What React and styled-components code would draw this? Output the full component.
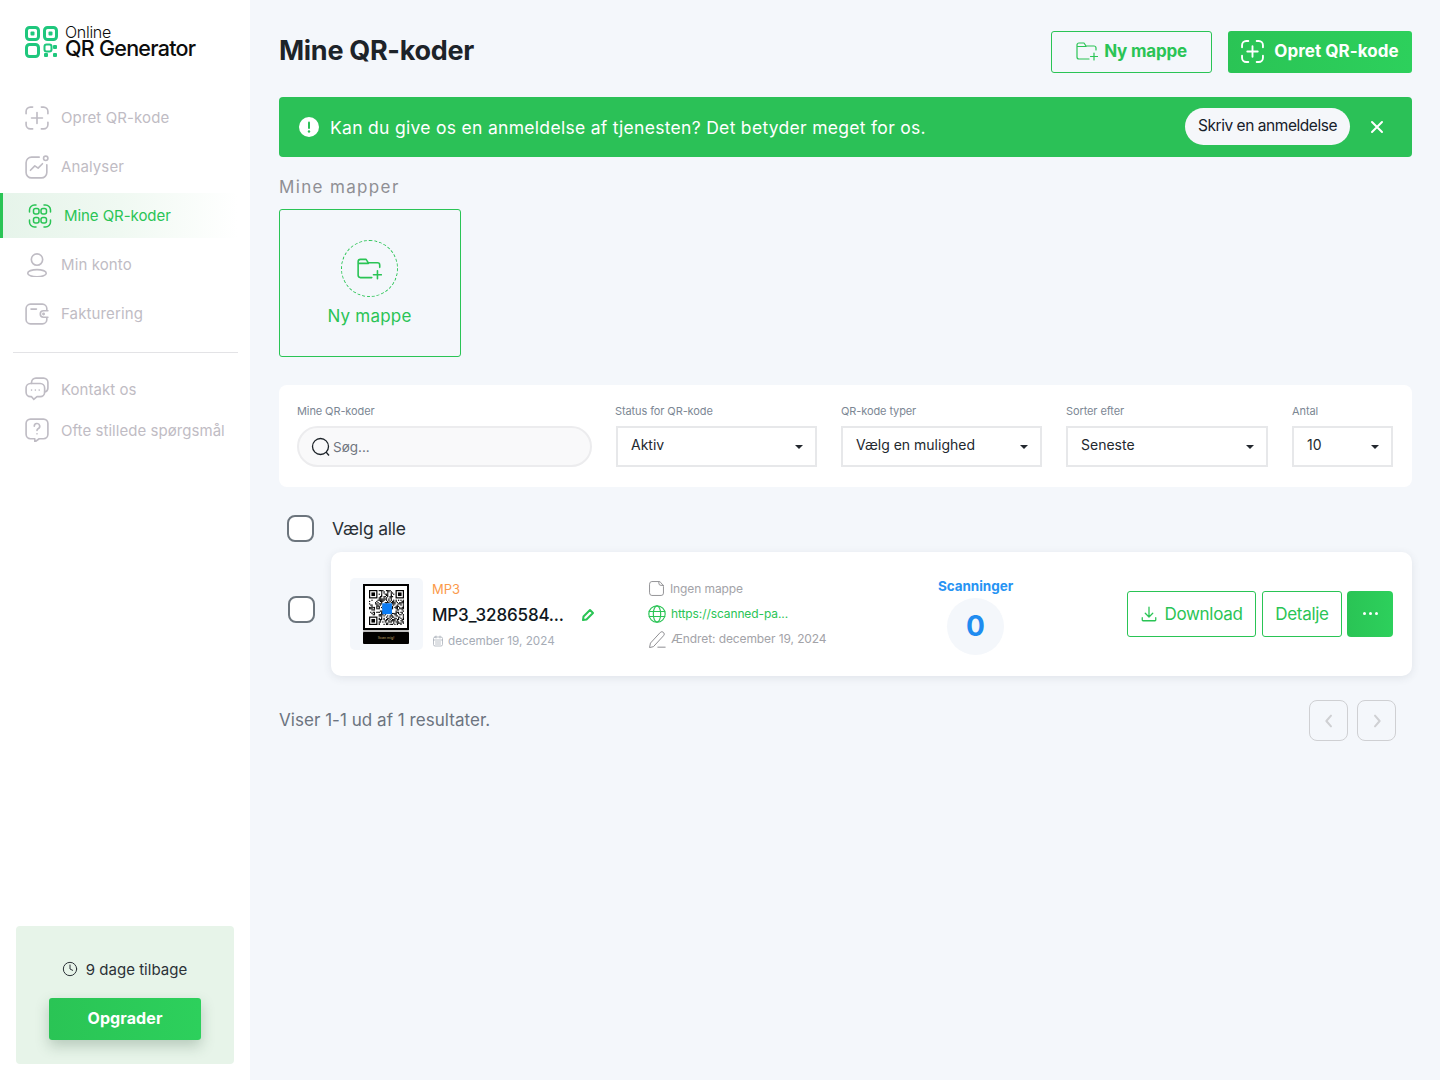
import React from "react";
import styled, { createGlobalStyle } from "styled-components";

const green = "#2ac455";
const banner = "#2bc157";
const Global = createGlobalStyle`
  html, body { margin: 0; padding: 0; height: 1080px; background: #f4f7fb; }
  body { font-family: Inter, "Noto Sans", sans-serif; color: #1d2329; overflow: hidden; }
  * { box-sizing: border-box; }
  #root { height: 1080px; }
`;

const Page = styled.div`display: flex; height: 1080px;`;
const Sidebar = styled.aside`
  width: 250px; flex: none; background: #fff; display: flex; flex-direction: column;
  padding: 25px 0 16px;
`;
const Logo = styled.div`display: flex; align-items: center; gap: 8px; padding-left: 25px; height: 34px;`;
const LogoText = styled.div`display: flex; flex-direction: column; color: #0c0c0c; margin: -2px 0 0 -1px;`;
const LogoTop = styled.span`font-size: 16px; line-height: 14px; font-weight: 300; letter-spacing: -0.3px;`;
const LogoBottom = styled.span`font-size: 21.5px; line-height: 18px; font-weight: 500; letter-spacing: -0.75px; white-space: nowrap;`;
const Nav = styled.nav`display: flex; flex-direction: column; gap: 4px; margin-top: 36px;`;
const NavItem = styled.a`
  display: flex; align-items: center; height: 45px; font-size: 15px;
  letter-spacing: ${p => (p.$active ? "-0.06px" : "0.12px")};
  gap: 12px; padding-left: 25px;
  width: ${p => (p.$active ? "237px" : "auto")};
  color: ${p => (p.$active ? green : "#bfbcc4")};
  background: ${p => (p.$active ? "linear-gradient(90deg,#e6f4ea 0%,#f0f9f2 50%,#fff 100%)" : "transparent")};
  border-left: ${p => (p.$active ? `3px solid ${green}` : "none")};
  svg { flex: none; }
`;
const Divider = styled.hr`border: 0; border-top: 1px solid #e3e3e6; margin: 16px 12px 21px 13px;`;
const SubNav = styled.nav`display: flex; flex-direction: column; gap: 11px;`;
const SubItem = styled.a`
  display: flex; align-items: center; height: 30px; gap: 12px; padding-left: 25px;
  font-size: 15px; letter-spacing: 0.05px; color: #bfbcc4; white-space: nowrap;
`;
const Trial = styled.div`
  margin: auto 16px 0; height: 138px; background: #e7f4e9; border-radius: 4px;
  display: flex; flex-direction: column; align-items: center; padding-top: 33px;
`;
const TrialText = styled.div`display: flex; align-items: center; gap: 8px; font-size: 15px; letter-spacing: 0.02px; color: #2b3137; height: 20px; margin-left: -1px;`;
const UpgradeBtn = styled.button`
  width: 152px; height: 42px; margin-top: 19px; padding: 0 0 2px; border: 0; border-radius: 3px; color: #fff;
  font: 700 16px Inter, sans-serif; letter-spacing: 0.1px; background: linear-gradient(90deg,#2ac455,#2dd05c);
  box-shadow: 0 6px 14px rgba(40,80,50,.25);
`;

const Main = styled.main`flex: 1; min-width: 0; padding: 31px 28px 0 29px;`;
const Header = styled.header`display: flex; align-items: center; justify-content: space-between; height: 42px;`;
const Title = styled.h1`margin: 0; padding-bottom: 4px; font-size: 27px; font-weight: 700; letter-spacing: -0.3px; color: #1d2329;`;
const HeaderActions = styled.div`display: flex; gap: 16px;`;
const HeaderBtn = styled.button`
  height: 42px; width: ${p => p.$w}px; display: flex; align-items: center; justify-content: center; gap: ${p => p.$gap || 6}px;
  padding: 0 0 2px; border-radius: 3px; font: 700 17px Inter, sans-serif; letter-spacing: ${p => (p.$solid ? "0.05px" : "-0.2px")};
  color: ${p => (p.$solid ? "#fff" : green)};
  background: ${p => (p.$solid ? "linear-gradient(90deg,#2ac455,#2dd05c)" : "transparent")};
  border: ${p => (p.$solid ? "0" : `1px solid ${green}`)};
`;
const Banner = styled.div`
  margin-top: 24px; height: 60px; border-radius: 4px; background: ${banner}; color: #fff;
  display: flex; align-items: center; padding: 0 28px 0 20px; font-size: 17.5px; letter-spacing: 0.3px;
`;
const BannerText = styled.span`margin-left: 11px; flex: 1;`;
const ReviewBtn = styled.button`
  height: 37px; width: 165px; border: 0; border-radius: 19px; background: #f5f7fa; color: #17202a; padding: 0 0 2px;
  font: 400 15.5px Inter, sans-serif; letter-spacing: -0.45px; margin: -2px 20px 0 0;
`;
const SectionTitle = styled.h2`margin: 20px 0 12px; font-size: 17px; line-height: 20px; font-weight: 400; letter-spacing: 1.35px; color: #8f8f94;`;
const FolderCard = styled.div`
  width: 182px; height: 148px; border: 1px solid ${green}; border-radius: 3px;
  display: flex; flex-direction: column; align-items: center; padding: 30px 1px 0 0;
  color: ${green}; font-size: 17px; letter-spacing: 0.2px;
`;
const DashedCircle = styled.div`
  width: 57px; height: 57px; border: 1px dashed ${green}; border-radius: 50%;
  display: flex; align-items: center; justify-content: center; margin-bottom: 9px;
`;
const FilterCard = styled.section`
  margin-top: 28px; height: 102px; background: #fff; border-radius: 8px; padding: 19px 19px 0 18px;
  display: grid; grid-template-columns: 295px 201px 201px 202px 101px; column-gap: 24px;
`;
const Field = styled.div`display: flex; flex-direction: column;`;
const FieldLabel = styled.label`font-size: 11px; line-height: 14px; color: #7c8794; margin: 0 0 8px ${p => (p.$nudge ? "-1px" : "0")}; letter-spacing: -0.1px;`;
const SearchBox = styled.div`
  height: 41px; border: 2px solid #ececee; border-radius: 21px; background: #f9f9fa;
  display: flex; align-items: center; padding-left: 12px; gap: 2px; font-size: 13.5px; color: #70767f;
`;
const Select = styled.div`
  height: 41px; border: 2px solid #e7e8ea; display: flex; align-items: center; justify-content: space-between;
  padding: 0 12px 5px 13px; font-size: 14px; color: #23282e; background: #fff;
`;
const Caret = styled.i`width: 0; height: 0; border: 4px solid transparent; border-top-color: #23282e; border-bottom: 0; margin-top: 5px;`;
const SelectAllRow = styled.div`display: flex; align-items: center; gap: 18px; margin-top: 28px; padding-left: 8px; height: 27px; font-size: 17.5px; letter-spacing: -0.2px; color: #2b3137;`;
const Box = styled.span`display: block; flex: none; width: 27px; height: 27px; border: 2px solid #6c757d; border-radius: 8px; background: #fff;`;
const Row = styled.div`display: flex; align-items: center; margin-top: 10px;`;
const CheckCell = styled.div`width: 52px; padding-left: 9px; flex: none; margin-top: -10px;`;
const QrCard = styled.article`
  flex: 1; height: 124px; background: #fff; border-radius: 10px; box-shadow: 0 2px 8px rgba(50,60,80,.10);
  display: flex; align-items: center; padding: 0 19px;
`;
const Thumb = styled.div`
  width: 73px; height: 72px; border-radius: 5px; background: #f4f7fb; flex: none;
  display: flex; flex-direction: column; align-items: center; padding: 6px 1px 0 0;
`;
const QrFrame = styled.div`width: 46px; height: 46px; border: 2px solid #000; background: #fff; display: flex; align-items: center; justify-content: center;`;
const QrCaption = styled.div`width: 46px; height: 12px; margin-top: 2px; background: #000; color: #c9a668; font-size: 3.5px; display: flex; align-items: center; justify-content: center; border-radius: 1px; box-shadow: 0 -2px 0 #bdbdbd;`;
const InfoCol = styled.div`width: 225px; flex: none; padding-left: 9px;`;
const TypeLabel = styled.div`font-size: 13px; line-height: 18px; color: #fb9a4b;`;
const NameRow = styled.div`display: flex; align-items: center; margin-top: 6px; font-size: 17px; line-height: 22px; letter-spacing: -0.15px; color: #0e1720; font-weight: 500; gap: 17px;`;
const DateRow = styled.div`display: flex; align-items: center; gap: 4px; font-size: 11.7px; line-height: 16px; margin-top: 7px; color: #a6acb6;`;
const MetaCol = styled.div`width: 289px; flex: none; display: flex; flex-direction: column; gap: 6px; margin-top: -1px;`;
const MetaRow = styled.div`display: flex; align-items: center; gap: 5px; height: 19px; font-size: 12px; color: ${p => p.$green ? green : "#a3a3a8"}; letter-spacing: -0.1px; white-space: nowrap;`;
const ScanCol = styled.div`width: 77px; flex: none; display: flex; flex-direction: column; align-items: center; margin-top: 5px;`;
const ScanLabel = styled.div`font-size: 13.5px; font-weight: 700; line-height: 16px; color: #2693f3; letter-spacing: -0.05px;`;
const ScanCircle = styled.div`width: 57px; height: 57px; margin-top: 4px; padding-bottom: 2px; border-radius: 50%; background: #f4f7fb; color: #1f8cf0; font-size: 28px; font-weight: 700; display: flex; align-items: center; justify-content: center;`;
const Actions = styled.div`margin-left: auto; display: flex; gap: 6px; margin-top: -1px;`;
const OutlineBtn = styled.button`
  height: 46px; width: ${p => p.$w}px; background: #fff; border: 1px solid ${green}; border-radius: 3px; color: ${green};
  font: 400 17px Inter, sans-serif; letter-spacing: -0.3px; display: flex; align-items: center; justify-content: center; gap: 6px; padding: 0;
`;
const MoreBtn = styled.button`
  width: 46px; height: 46px; margin-left: -1px; border: 0; border-radius: 4px; background: linear-gradient(90deg,#2ac455,#2dd05c); color: #fff;
  display: flex; align-items: center; justify-content: center; gap: 3px; padding: 0;
  i { width: 3px; height: 3px; border-radius: 50%; background: #fff; }
`;
const Footer = styled.div`display: flex; align-items: center; justify-content: space-between; margin-top: 24px; padding-right: 16px; font-size: 17px; letter-spacing: 0.04px; color: #6c7480;`;
const FooterText = styled.span`margin-top: -2px;`;
const Pager = styled.div`display: flex; gap: 9px;`;
const PageBtn = styled.button`width: 39px; height: 41px; border: 1px solid #cfd0d3; border-radius: 8px; background: transparent; display: flex; align-items: center; justify-content: center; padding: 0;`;

const S = ({ size = 24, w, h, vb, children, color = "currentColor", sw = 1.5 }) => (
  <svg width={w || size} height={h || size} viewBox={vb || "1 1 22 22"} fill="none" stroke={color} strokeWidth={sw} strokeLinecap="round" strokeLinejoin="round">{children}</svg>
);
const PlusScan = p => <S {...p}><path d="M2 8V6a4 4 0 0 1 4-4h2M16 2h2a4 4 0 0 1 4 4v2M22 16v2a4 4 0 0 1-4 4h-2M8 22H6a4 4 0 0 1-4-4v-2M12 7v10M7 12h10" /></S>;
const Chart = p => <S {...p}><path d="M14 3H7a5 5 0 0 0-5 5v9a5 5 0 0 0 5 5h9a5 5 0 0 0 5-5v-7M6 15l4-4 3 2 4-4" /><circle cx="20" cy="4" r="2" /></S>;
const QrScan = p => <S {...p} vb="0 0 24 24"><rect x="5.5" y="4.5" width="5.5" height="5.5" rx="2" /><rect x="13" y="4.5" width="5.5" height="5.5" rx="2" /><rect x="5.5" y="13.5" width="5.5" height="5.5" rx="2" /><rect x="13" y="13.5" width="5.5" height="5.5" rx="2" /><path d="M1.5 8V6a5 5 0 0 1 5-5h1.500M16 1h1.500a5 5 0 0 1 5 5v2M22.500 16v2a5 5 0 0 1-5 5H16M8 23H6.500a5 5 0 0 1-5-5v-2" /></S>;
const User = p => <S {...p}><circle cx="12" cy="7" r="5.200" /><ellipse cx="12" cy="19.500" rx="8.500" ry="3.300" /></S>;
const Wallet = p => <S {...p}><path d="M21 8V7a4 4 0 0 0-4-4H6a4 4 0 0 0-4 4v10a4 4 0 0 0 4 4h11a4 4 0 0 0 4-4v-1M6.500 7.500h5" /><path d="M22 9h-4a3 3 0 0 0 0 6h4" /><circle cx="18" cy="12" r=".6" /></S>;
const Chat = p => <S {...p}><path d="M7 7V6a4 4 0 0 1 4-4h7a4 4 0 0 1 4 4v5a4 4 0 0 1-3 3.800" /><path d="M6 7h9a4 4 0 0 1 4 4v4a4 4 0 0 1-4 4h-3l-3 2.500L7 19H6a4 4 0 0 1-4-4v-4a4 4 0 0 1 4-4z" /><path d="M7 13h.01M10.500 13h.01M14 13h.01" /></S>;
const Question = p => <S {...p}><path d="M6 2h12a4 4 0 0 1 4 4v10a4 4 0 0 1-4 4h-4l-4 3v-3H6a4 4 0 0 1-4-4V6a4 4 0 0 1 4-4z" /><path d="M9.500 8.500a2.500 2.500 0 1 1 3.500 2.300c-.7.400-1 .8-1 1.700M12 15.500h.01" /></S>;
const FolderPlus = p => <S {...p}><path d="M21 11V9a2 2 0 0 0-2-2h-8L9 4H4a2 2 0 0 0-2 2v12a2 2 0 0 0 2 2h10M3 7.500h8" /><path d="M19 14v7M15.500 17.500h7" /></S>;

const LogoMark = () => (
  <svg width="33" height="32" viewBox="0 0 33 32" fill="none">
    <rect x="1.500" y="1.500" width="12" height="12" rx="3" stroke="#1fc77d" strokeWidth="3" />
    <rect x="19.500" y="1.500" width="12" height="12" rx="3" stroke="#1fc77d" strokeWidth="3" />
    <rect x="1.500" y="18.500" width="12" height="12" rx="3" stroke="#1fc77d" strokeWidth="3" />
    <rect x="5.500" y="5.500" width="4" height="4" rx="1" fill="#1fc77d" />
    <rect x="23.500" y="5.500" width="4" height="4" rx="1" fill="#1fc77d" />
    <rect x="19.500" y="18.500" width="7" height="7" rx="2" stroke="#1fc77d" strokeWidth="2" />
    <rect x="19" y="27" width="4" height="4" rx="1" fill="#1fc77d" />
    <rect x="28" y="19" width="4" height="4" rx="1" fill="#1fc77d" />
    <rect x="28" y="27" width="4" height="4" rx="1" fill="#1fc77d" />
  </svg>
);

const QrCode = () => {
  const n = 29, cells = [];
  let seed = 7;
  for (let y = 0; y < n; y++) for (let x = 0; x < n; x++) {
    seed = (seed * 1103515245 + 12345) & 0x7fffffff;
    const inF = (x < 8 && y < 8) || (x >= n - 8 && y < 8) || (x < 8 && y >= n - 8);
    if (!inF && (seed >> 16) % 2) cells.push(<rect key={x + "-" + y} x={x} y={y} width="1" height="1" />);
  }
  const F = ({ x, y }) => <g><rect x={x + .5} y={y + .5} width="6" height="6" fill="none" stroke="#000" /><rect x={x + 2} y={y + 2} width="3" height="3" /></g>;
  return (
    <svg width="35" height="35" viewBox="0 0 29 29" fill="#000">
      {cells}
      <F x={0} y={0} /><F x={22} y={0} /><F x={0} y={22} />
      <rect x="11" y="11" width="8" height="9" fill="#0a7cf5" />
    </svg>
  );
};

export default function App() {
  return (
    <Page>
      <Global />
      <Sidebar>
        <Logo>
          <LogoMark />
          <LogoText><LogoTop>Online</LogoTop><LogoBottom>QR Generator</LogoBottom></LogoText>
        </Logo>
        <Nav>
          <NavItem><PlusScan /> Opret QR-kode</NavItem>
          <NavItem><Chart /> Analyser</NavItem>
          <NavItem $active><QrScan /> Mine QR-koder</NavItem>
          <NavItem><User /> Min konto</NavItem>
          <NavItem><Wallet /> Fakturering</NavItem>
        </Nav>
        <Divider />
        <SubNav>
          <SubItem><Chat /> Kontakt os</SubItem>
          <SubItem><Question /> Ofte stillede spørgsmål</SubItem>
        </SubNav>
        <Trial>
          <TrialText>
            <S size={16} sw={1.500} vb="0 0 24 24"><circle cx="12" cy="12" r="10" /><path d="M12 6v6l4 2" /></S>
            9 dage tilbage
          </TrialText>
          <UpgradeBtn>Opgrader</UpgradeBtn>
        </Trial>
      </Sidebar>
      <Main>
        <Header>
          <Title>Mine QR-koder</Title>
          <HeaderActions>
            <HeaderBtn $w={161}><FolderPlus size={22} sw={1.200} />Ny mappe</HeaderBtn>
            <HeaderBtn $solid $w={184} $gap={10}><PlusScan size={23} sw={1.800} />Opret QR-kode</HeaderBtn>
          </HeaderActions>
        </Header>
        <Banner>
          <svg width="20" height="20" viewBox="0 0 20 20"><circle cx="10" cy="10" r="10" fill="#fff" /><rect x="9" y="4.500" width="2" height="7.500" rx="1" fill={banner} /><circle cx="10" cy="14.500" r="1.200" fill={banner} /></svg>
          <BannerText>Kan du give os en anmeldelse af tjenesten? Det betyder meget for os.</BannerText>
          <ReviewBtn>Skriv en anmeldelse</ReviewBtn>
          <S size={14} sw={2} vb="0 0 14 14"><path d="M2 2l10 10M12 2L2 12" /></S>
        </Banner>
        <SectionTitle>Mine mapper</SectionTitle>
        <FolderCard>
          <DashedCircle><FolderPlus size={25} sw={1.400} /></DashedCircle>
          Ny mappe
        </FolderCard>
        <FilterCard>
          <Field>
            <FieldLabel>Mine QR-koder</FieldLabel>
            <SearchBox>
              <svg width="20" height="20" viewBox="0 0 20 20" fill="none" stroke="#1d2329" strokeWidth="1.300"><circle cx="9.500" cy="9.500" r="8" /><path d="M15 15l3 3.500" /></svg>
              Søg...
            </SearchBox>
          </Field>
          <Field><FieldLabel $nudge>Status for QR-kode</FieldLabel><Select>Aktiv<Caret /></Select></Field>
          <Field><FieldLabel>QR-kode typer</FieldLabel><Select>Vælg en mulighed<Caret /></Select></Field>
          <Field><FieldLabel>Sorter efter</FieldLabel><Select>Seneste<Caret /></Select></Field>
          <Field><FieldLabel>Antal</FieldLabel><Select>10<Caret /></Select></Field>
        </FilterCard>
        <SelectAllRow><Box />Vælg alle</SelectAllRow>
        <Row>
          <CheckCell><Box /></CheckCell>
          <QrCard>
            <Thumb>
              <QrFrame><QrCode /></QrFrame>
              <QrCaption>Scan mig!</QrCaption>
            </Thumb>
            <InfoCol>
              <TypeLabel>MP3</TypeLabel>
              <NameRow>
                MP3_3286584...
                <svg width="14" height="14" viewBox="0 0 14 14" fill="none" stroke={green} strokeWidth="2" strokeLinejoin="round"><path d="M2 12l.5-3.500L9 2l3 3-6.500 6.500z" /></svg>
              </NameRow>
              <DateRow>
                <S size={12} sw={1.500} color="#a6acb6" vb="0 0 24 24"><rect x="3" y="4" width="18" height="18" rx="3" /><path d="M3 10h18M8 2v4M16 2v4M7 14h10M7 18h10" /></S>
                december 19, 2024
              </DateRow>
            </InfoCol>
            <MetaCol>
              <MetaRow><S size={17} sw={1.200} color="#8c8c90"><path d="M3 6a3 3 0 0 1 3-3h9a3 3 0 0 1 2.500 1.200L20.500 8A2 2 0 0 1 21 9.500V18a3 3 0 0 1-3 3H6a3 3 0 0 1-3-3z" /><path d="M15 3v2a3 3 0 0 0 3 3h3" /></S>Ingen mappe</MetaRow>
              <MetaRow $green><S size={18} sw={1.400}><circle cx="12" cy="12" r="10" /><ellipse cx="12" cy="12" rx="4.500" ry="10" /><path d="M2.500 9h19M2.500 15h19" /></S>https://scanned-pa...</MetaRow>
              <MetaRow><S size={18} sw={1.200} color="#8c8c90"><path d="M3 22l1-5L16 4a2.800 2.800 0 0 1 4 4L8 21zM13 22h9" /></S>Ændret: december 19, 2024</MetaRow>
            </MetaCol>
            <ScanCol>
              <ScanLabel>Scanninger</ScanLabel>
              <ScanCircle>0</ScanCircle>
            </ScanCol>
            <Actions>
              <OutlineBtn $w={129}><S size={18} sw={1.700} vb="0 0 24 24"><path d="M12 3v12M7 11l5 5 5-5M3 17v3a1 1 0 0 0 1 1h16a1 1 0 0 0 1-1v-3" /></S>Download</OutlineBtn>
              <OutlineBtn $w={80}>Detalje</OutlineBtn>
              <MoreBtn aria-label="Mere"><i /><i /><i /></MoreBtn>
            </Actions>
          </QrCard>
        </Row>
        <Footer>
          <FooterText>Viser 1-1 ud af 1 resultater.</FooterText>
          <Pager>
            <PageBtn aria-label="Forrige"><S size={16} sw={3} color="#cfd0d3" vb="0 0 24 24"><path d="M15 4l-7 8 7 8" /></S></PageBtn>
            <PageBtn aria-label="Næste"><S size={16} sw={3} color="#cfd0d3" vb="0 0 24 24"><path d="M9 4l7 8-7 8" /></S></PageBtn>
          </Pager>
        </Footer>
      </Main>
    </Page>
  );
}
